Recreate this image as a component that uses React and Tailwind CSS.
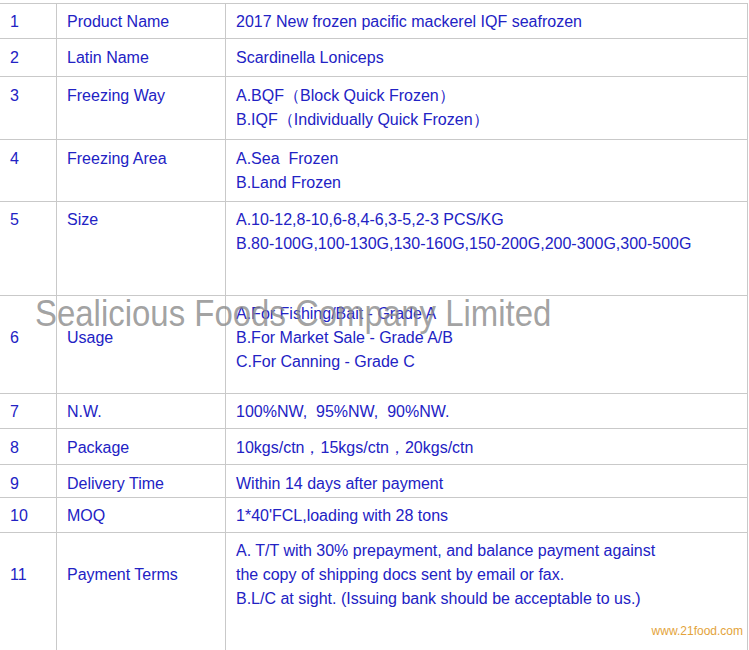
const rows = [
  { n: '1', label: 'Product Name', lines: ['2017 New frozen pacific mackerel IQF seafrozen'], h: 'h-[35px]', pt: 'pt-[6px]' },
  { n: '2', label: 'Latin Name', lines: ['Scardinella Loniceps'], h: 'h-[38px]', pt: 'pt-[7px]' },
  { n: '3', label: 'Freezing Way', lines: ['A.BQF（Block Quick Frozen）', 'B.IQF（Individually Quick Frozen）'], h: 'h-[63px]', pt: 'pt-[7px]' },
  { n: '4', label: 'Freezing Area', lines: ['A.Sea\u00a0 Frozen', 'B.Land Frozen'], h: 'h-[62px]', pt: 'pt-[7px]' },
  {
    n: '5',
    label: 'Size',
    lines: ['A.10-12,8-10,6-8,4-6,3-5,2-3 PCS/KG', 'B.80-100G,100-130G,130-160G,150-200G,200-300G,300-500G'],
    h: 'h-[94px]',
    pt: 'pt-[6px]',
  },
  {
    n: '6',
    label: 'Usage',
    lines: ['A.For Fishing/Bait - Grade A', 'B.For Market Sale - Grade A/B', 'C.For Canning - Grade C'],
    h: 'h-[98px]',
    pt: 'pt-[6px]',
    mid: true,
  },
  { n: '7', label: 'N.W.', lines: ['100%NW,\u00a0 95%NW,\u00a0 90%NW.'], h: 'h-[35px]', pt: 'pt-[6px]' },
  { n: '8', label: 'Package', lines: ['10kgs/ctn，15kgs/ctn，20kgs/ctn'], h: 'h-[36px]', pt: 'pt-[7px]' },
  { n: '9', label: 'Delivery Time', lines: ['Within 14 days after payment'], h: 'h-[33px]', pt: 'pt-[7px]' },
  { n: '10', label: 'MOQ', lines: ["1*40'FCL,loading with 28 tons"], h: 'h-[35px]', pt: 'pt-[6px]' },
  {
    n: '11',
    label: 'Payment Terms',
    lines: [
      'A. T/T with 30% prepayment, and balance payment against',
      'the copy of shipping docs sent by email or fax.',
      'B.L/C at sight. (Issuing bank should be acceptable to us.)',
    ],
    h: 'h-[140px]',
    pt: 'pt-[6px]',
    mid: true,
    last: true,
  },
];

export default function App() {
  return (
    <div className="relative w-[749px] h-[650px] overflow-hidden bg-white font-['Liberation_Sans',Arial,sans-serif] text-[16px] leading-[24px] text-[#2222c4]">
      <div className="mt-[3px] w-[748px] border-t border-[#c9c9c9]">
        {rows.map((r) => (
          <div
            key={r.n}
            className={`grid grid-cols-[57px_169px_522px] ${r.h} ${r.last ? '' : 'border-b border-[#c9c9c9]'}`}
          >
            <div className={`border-r border-[#c9c9c9] pl-[10px] ${r.pt}`}>
              <div className={r.mid ? 'mt-[24px]' : ''}>{r.n}</div>
            </div>
            <div className={`border-r border-[#c9c9c9] pl-[10px] ${r.pt}`}>
              <div className={r.mid ? 'mt-[24px]' : ''}>{r.label}</div>
            </div>
            <div className={`border-r border-[#c9c9c9] pl-[10px] ${r.pt}`}>
              {r.lines.map((l, i) => (
                <div key={i} className="whitespace-nowrap">
                  {l}
                </div>
              ))}
            </div>
          </div>
        ))}
      </div>

      {/* watermark */}
      <div className="absolute left-[35px] top-[292px] origin-left scale-x-[0.915] text-[36px] leading-[44px] text-[#8a8a8a]/80 whitespace-nowrap pointer-events-none">
        Sealicious Foods Company Limited
      </div>
      <div className="absolute right-[6px] top-[623px] text-[12px] leading-[16px] text-[#e3a33a] whitespace-nowrap">
        www.21food.com
      </div>
    </div>
  );
}
